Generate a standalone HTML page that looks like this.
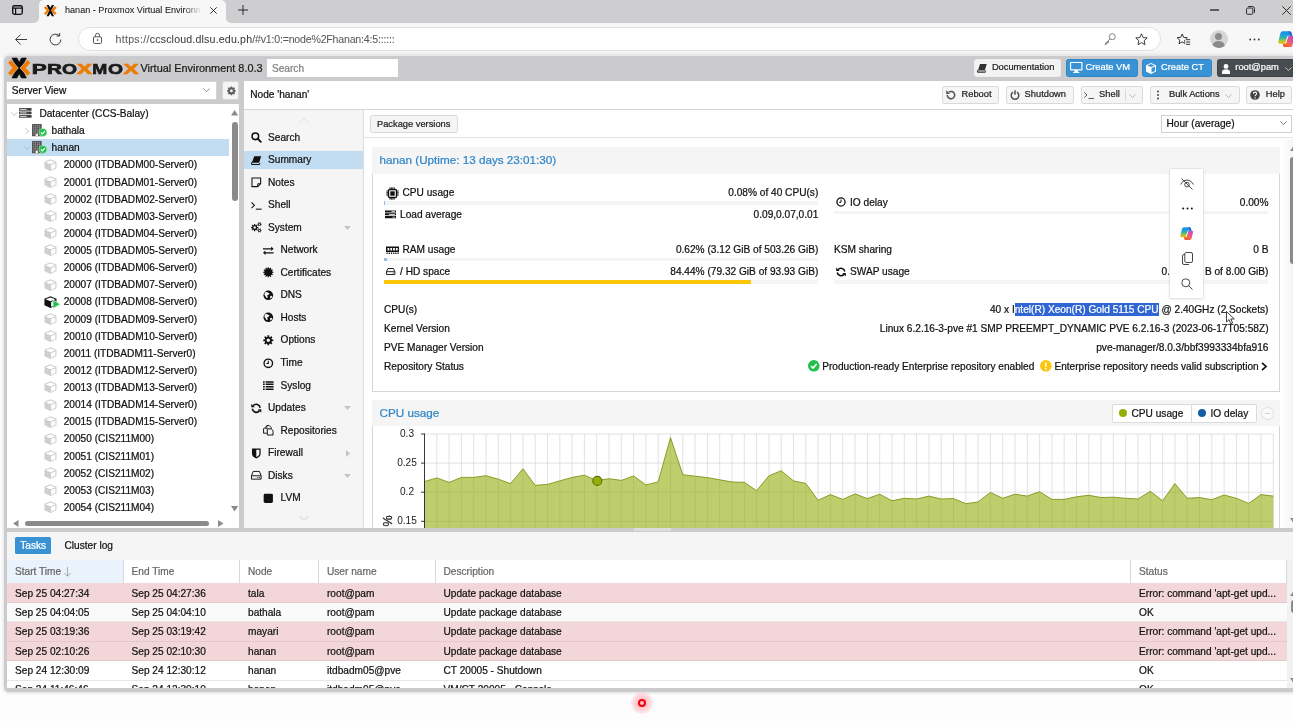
<!DOCTYPE html>
<html lang="en">
<head>
<meta charset="utf-8">
<title>hanan - Proxmox Virtual Environment</title>
<style>
*{box-sizing:border-box;margin:0;padding:0}
html,body{width:1293px;height:721px;overflow:hidden;background:#fdfdfd}
body{font-family:"Liberation Sans",Arial,Helvetica,sans-serif;font-size:10.14px;color:#111;position:relative;line-height:1}
.a{position:absolute}
.t{position:absolute;white-space:nowrap;line-height:12px;height:12px;-webkit-text-stroke:0.22px currentColor}
.r{text-align:right}
svg{position:absolute;overflow:visible}
/* browser chrome */
#tabstrip{left:0;top:0;width:1293px;height:23px;background:#cecdd0}
#tab{left:39px;top:0;width:187px;height:23px;background:#f7f7f7;border-radius:5px 5px 0 0}
#toolbar{left:0;top:23px;width:1293px;height:34px;background:#f7f7f7}
#url{left:78px;top:27px;width:1083px;height:24px;background:#fff;border:1px solid #e2e2e2;border-radius:12px}
.seg{font-family:"Liberation Sans",sans-serif}
/* page */
#shadow{left:2.500px;top:53.500px;width:1300px;height:641px;border-radius:7px;background:#e3e3e4;filter:blur(1.5px)}
#page{left:4.200px;top:55.600px;width:1296px;height:636.700px;background:#cbcacd;border-radius:5px}
.btn{position:absolute;height:18px;border:1px solid #d9d9d9;border-radius:2.500px;background:#f5f5f5;font-size:9.3px;color:#222}
.btn .t{top:1px}
.blue{background:#3892d4;border-color:#2f86c6;color:#fff}
.dark{background:#474c50;border-color:#3c4144;color:#fff}
/* tree */
#tree{left:7px;top:104px;width:233px;height:424px;background:#fff;overflow:hidden}
.tr{position:absolute;left:0;width:222px;height:17.13px}
.tr .t{top:3.4px}
.tr svg{margin-top:0.8px}
/* nav */
#nav{left:244px;top:110px;width:119px;height:418px;background:#f5f5f5;overflow:hidden}
.ni{position:absolute;left:0;width:119px;height:18px}
.ni .t{top:3.5px}
.ni svg{margin-top:0.4px}
/* grid */
.gh{position:absolute;top:560px;height:23.5px;background:#fff;border-right:1px solid #d8d8d8;color:#666}
.gh .t{top:6px;left:8px}
.gr{position:absolute;left:7px;width:1279.6px;height:19.6px;border-bottom:1px solid #e6e6e6}
.gr.e{background:#f3d6d8;border-bottom-color:#e6c8ca}
.gr.w{background:#fafafa}
.gr .t{top:var(--t,4.5px)}
</style>
</head>
<body>
<div id="wrap" style="position:absolute;left:0;top:0;width:1293px;height:721px;overflow:hidden;will-change:transform">
<!-- ===== Browser chrome ===== -->
<div class="a" id="tabstrip"></div>
<div class="a" id="tab"></div>
<div class="a" id="toolbar"></div>
<div class="a" id="url"></div>

<!-- tab actions icon -->
<svg style="left:12px;top:5px" width="11" height="10" viewBox="0 0 11 10"><rect x="0.700" y="0.700" width="9.600" height="8.600" rx="1.800" fill="none" stroke="#111" stroke-width="1.350"/><path d="M0.600 3h9.800M3.600 3v6.400" stroke="#111" stroke-width="1.250" fill="none"/></svg>
<!-- tab flares -->
<svg style="left:34px;top:18px" width="5" height="5" viewBox="0 0 5 5"><path d="M5 0v5H0A5 5 0 0 0 5 0z" fill="#f7f7f7"/></svg>
<svg style="left:226px;top:18px" width="5" height="5" viewBox="0 0 5 5"><path d="M0 0v5h5A5 5 0 0 1 0 0z" fill="#f7f7f7"/></svg>
<!-- favicon -->
<svg style="left:44.100px;top:4.600px" width="12.600" height="11.200" viewBox="0 0 22.400 20"><path d="M4.600 0H8.400L11.200 4.800 14.000 0H17.800L13.300 10 17.800 20H14.000L11.200 15.200 8.400 20H4.600L9.100 10z" fill="#0d0d0d"/><path d="M1.500 3.400 7.400 9.900 1.500 16.400" stroke="#ee7a00" stroke-width="4.200" fill="none"/><path d="M20.900 3.400 15.000 9.900 20.900 16.400" stroke="#ee7a00" stroke-width="4.200" fill="none"/></svg>
<div class="t" style="left:65px;top:3.700px;font-size:9.100px;-webkit-text-stroke:0.080px #1b1b1b;color:#1b1b1b;width:138px;overflow:hidden;-webkit-mask-image:linear-gradient(90deg,#000 86%,transparent 99%);mask-image:linear-gradient(90deg,#000 86%,transparent 99%)">hanan - Proxmox Virtual Environment</div>
<svg style="left:210px;top:6.5px" width="7" height="7" viewBox="0 0 7 7"><path d="M0.3 0.3l6.4 6.4M6.7 0.3L0.3 6.7" stroke="#1b1b1b" stroke-width="0.9"/></svg>
<svg style="left:237.5px;top:5px" width="10" height="10" viewBox="0 0 10 10"><path d="M5 0v10M0 5h10" stroke="#1b1b1b" stroke-width="0.9"/></svg>
<!-- window controls -->
<svg style="left:1210px;top:9px" width="9" height="2" viewBox="0 0 9 2"><path d="M0 1h9" stroke="#000" stroke-width="1.100"/></svg>
<svg style="left:1246px;top:5.5px" width="9" height="9" viewBox="0 0 9 9"><rect x="0.5" y="2" width="6.3" height="6.3" rx="1.2" fill="none" stroke="#1b1b1b" stroke-width="0.9"/><path d="M2.2 0.5h4.3a2 2 0 0 1 2 2v4.3" fill="none" stroke="#1b1b1b" stroke-width="0.9"/></svg>
<svg style="left:1282px;top:5.5px" width="9" height="9" viewBox="0 0 9 9"><path d="M0.3 0.3l8.4 8.4M8.7 0.3L0.3 8.7" stroke="#1b1b1b" stroke-width="0.9"/></svg>
<!-- nav buttons -->
<svg style="left:15px;top:33.5px" width="12" height="11" viewBox="0 0 12 11"><path d="M12 5.5H0.8M5.6 0.5 0.6 5.5l5 5" fill="none" stroke="#3a3a3a" stroke-width="1"/></svg>
<svg style="left:48.5px;top:32.5px" width="13" height="13" viewBox="0 0 13 13"><path d="M11.9 6.5a5.4 5.4 0 1 1-1.7-3.9" fill="none" stroke="#3a3a3a" stroke-width="1"/><path d="M10.6 0v3h-3" fill="none" stroke="#3a3a3a" stroke-width="1"/></svg>
<!-- lock -->
<svg style="left:93px;top:33px" width="9" height="11" viewBox="0 0 9 11"><rect x="0.5" y="3.8" width="8" height="6.7" rx="1.2" fill="none" stroke="#444" stroke-width="0.9"/><path d="M2.4 3.8V2.5a2.1 2.1 0 0 1 4.2 0v1.3" fill="none" stroke="#444" stroke-width="0.9"/><circle cx="4.5" cy="7.1" r="0.8" fill="#444"/></svg>
<div class="t" style="left:115.5px;top:32.5px;font-size:10.6px;-webkit-text-stroke:0.050px #555;color:#5a5a5a;line-height:13px;height:13px"><span style="letter-spacing:0.3px">https://</span><span style="color:#3a3a3a;letter-spacing:0.18px">ccscloud.dlsu.edu.ph</span><span style="letter-spacing:-0.2px">/#v1:0:=node%2Fhanan:4:5::::::</span></div>
<!-- key -->
<svg style="left:1104px;top:33px" width="12" height="12" viewBox="0 0 12 12"><circle cx="8.3" cy="3.7" r="3" fill="none" stroke="#777" stroke-width="0.9"/><path d="M6.1 5.9 0.8 11.2h2v-1.6h1.6V8" fill="none" stroke="#777" stroke-width="0.9"/></svg>
<!-- star -->
<svg style="left:1135px;top:32.500px" width="13" height="13" viewBox="0 0 13 13"><path d="M6.50 0.80L8.15 4.53L12.21 4.95L9.16 7.67L10.03 11.65L6.50 9.60L2.97 11.65L3.84 7.67L0.79 4.95L4.85 4.53z" fill="none" stroke="#333" stroke-width="0.950" stroke-linejoin="round"/></svg>
<!-- favorites -->
<svg style="left:1176.500px;top:32.500px" width="14" height="13" viewBox="0 0 14 13"><path d="M5.20 1.00L6.67 4.38L10.34 4.73L7.58 7.17L8.37 10.77L5.20 8.90L2.03 10.77L2.82 7.17L0.06 4.73L3.73 4.38z" fill="none" stroke="#2a2a2a" stroke-width="0.950" stroke-linejoin="round"/><rect x="8.200" y="5.800" width="6" height="6.500" fill="#f7f7f7"/><path d="M9 6.700h4.200M9 9h4.200M9 11.300h4.200" stroke="#2a2a2a" stroke-width="0.950"/></svg>
<!-- profile -->
<div class="a" style="left:1209.5px;top:30px;width:18px;height:18px;border-radius:9px;background:#d6d5d6;overflow:hidden"><div class="a" style="left:5.5px;top:3px;width:7px;height:7px;border-radius:4px;background:#8b8a8b"></div><div class="a" style="left:2.5px;top:11px;width:13px;height:10px;border-radius:6px 6px 0 0;background:#8b8a8b"></div></div>
<!-- dots -->
<svg style="left:1249px;top:38px" width="11" height="3" viewBox="0 0 11 3"><circle cx="1.2" cy="1.5" r="0.9" fill="#333"/><circle cx="5.5" cy="1.5" r="0.9" fill="#333"/><circle cx="9.8" cy="1.5" r="0.9" fill="#333"/></svg>
<!-- copilot -->
<svg style="left:1278px;top:30.750px" width="16" height="16.300" viewBox="0 0 16 16.300"><defs><linearGradient id="cp1" x1="0" y1="0" x2="0" y2="1"><stop offset="0" stop-color="#1a8df0"/><stop offset="0.300" stop-color="#1f9ddc"/><stop offset="0.550" stop-color="#33b7a0"/><stop offset="0.780" stop-color="#b7c62e"/><stop offset="1" stop-color="#f3b81f"/></linearGradient><linearGradient id="cp2" x1="1" y1="0" x2="0.200" y2="1"><stop offset="0" stop-color="#a850e6"/><stop offset="0.350" stop-color="#e24fa0"/><stop offset="0.700" stop-color="#f36a4a"/><stop offset="1" stop-color="#f2552a"/></linearGradient><symbol id="cpl" viewBox="0 0 16 16.300"><path d="M9.600 6.200Q10.100 4.700 11.600 4.700H14.500Q16.600 4.700 16.100 6.800L14.400 14.200Q13.900 16.200 12 16.200H6.600Q5.400 16.200 5.100 14.800L4.700 12.400H7Q8 12.400 8.400 11.200z" fill="url(#cp2)"/><path d="M2.400 2.300Q2.900 0.300 4.900 0.300H11.400Q12.900 0.300 13.400 1.800L14.200 4.700H11.400Q9.900 4.700 9.500 6.100L7.700 11.900Q7.400 12.800 6.400 12.800H1.800Q-0.200 12.800 0.300 10.800z" fill="url(#cp1)"/><path d="M10.400 0.300H11.400Q12.900 0.300 13.400 1.800L14.200 4.700H12.400Q12 2 10.400 0.300z" fill="#2a52d4"/><path d="M9.900 5.200 7.500 12.500" stroke="#fff" stroke-width="0.900"/></symbol></defs><use href="#cpl" x="0" y="0" width="16" height="16.300"/></svg>


<!-- ===== Page ===== -->
<div class="a" id="shadow"></div>
<div class="a" id="page"></div>

<!-- logo -->
<svg style="left:8px;top:57.7px" width="22.4" height="20" viewBox="0 0 22.4 20"><path d="M4.000 0H8.900L11.200 4.200 13.500 0H18.400L13.700 10 18.400 20H13.500L11.200 15.800 8.900 20H4.000L8.700 10z" fill="#0d0d0d" stroke="#0d0d0d" stroke-width="0.6" stroke-linejoin="round"/><path d="M1.500 3.400 7.400 9.900 1.500 16.400" stroke="#d8d0c8" stroke-width="4.900" fill="none"/><path d="M20.900 3.400 15.000 9.900 20.900 16.400" stroke="#d8d0c8" stroke-width="4.900" fill="none"/><path d="M1.500 3.400 7.400 9.900 1.500 16.400" stroke="#ee7a00" stroke-width="4.000" fill="none"/><path d="M20.900 3.400 15.000 9.900 20.900 16.400" stroke="#ee7a00" stroke-width="4.000" fill="none"/></svg>
<svg style="left:0;top:0" width="160" height="80" font-family="'Liberation Sans',Arial,sans-serif" font-weight="bold" font-size="15.4px" stroke-width="0.7" paint-order="stroke"><text transform="translate(31.7,73.8) scale(1.460,1)" fill="#1a1a1a" stroke="#1a1a1a">P</text><text transform="translate(46.9,73.8) scale(1.349,1)" fill="#1a1a1a" stroke="#1a1a1a">R</text><text transform="translate(62.0,73.8) scale(1.252,1)" fill="#1a1a1a" stroke="#1a1a1a">O</text><text transform="translate(77.0,73.8) scale(1.460,1)" fill="#ee7a00" stroke="#ee7a00">X</text><text transform="translate(92.2,73.8) scale(1.169,1)" fill="#1a1a1a" stroke="#1a1a1a">M</text><text transform="translate(107.9,73.8) scale(1.252,1)" fill="#1a1a1a" stroke="#1a1a1a">O</text><text transform="translate(123.5,73.8) scale(1.460,1)" fill="#ee7a00" stroke="#ee7a00">X</text></svg>
<div class="t" style="left:140.5px;top:61.5px;font-size:10.9px;line-height:13px;height:13px;color:#1a1a1a">Virtual Environment 8.0.3</div>
<div class="a" style="left:266.800px;top:59.200px;width:131.400px;height:17.800px;background:#fff"><div class="t" style="left:5.200px;top:3.800px;color:#808080">Search</div></div>
<!-- header buttons -->
<div class="btn" style="left:973.600px;top:59px;width:87.700px;background:#f3f3f3;border-color:#eee"><svg style="left:2.3px;top:3.5px" width="10" height="9" viewBox="0 0 10 9"><path d="M2.600 0.300H9.600L7.600 6.500H1.400A1.300 1.300 0 0 0 1.400 8.700H7.400L7.600 8.000" fill="none" stroke="#333" stroke-width="0.01"/><path d="M3 0h6.800l-2 6.400H1.600c-.8 0-.8 1.200 0 1.200h6.200l.4-1h.9l-.7 2.200H1.600C-.6 8.800-.3 6 1.200 5.700z" fill="#333"/></svg><div class="t" style="left:17.3px">Documentation</div></div>
<div class="btn blue" style="left:1066px;top:59px;width:71.500px"><svg style="left:2.600px;top:1.600px" width="12.500" height="11.200" viewBox="0 0 11 10" preserveAspectRatio="none"><path d="M0.8 0h9.400a.8.8 0 0 1 .8.800v6a.8.8 0 0 1-.8.800H6.800l.4 1.400h1v.800H2.800V9h1l.4-1.400H.8a.8.8 0 0 1-.8-.8V.8A.8.8 0 0 1 .8 0zM1 1v5.400h9V1z" fill="#fff"/></svg><div class="t" style="left:18.5px">Create VM</div></div>
<div class="btn blue" style="left:1142px;top:59px;width:69.500px"><svg style="left:3px;top:3px" width="10" height="11" viewBox="0 0 10 11"><path d="M5 0 10 2.200v6.400L5 11 0 8.600V2.200zM1.300 2.500 5 4.100l3.700-1.600L5 1.000zM5.500 5v4.600l3.500-1.700V3.500z" fill="#fff" fill-rule="evenodd"/></svg><div class="t" style="left:18px">Create CT</div></div>
<div class="btn dark" style="left:1217px;top:59px;width:80px"><svg style="left:4px;top:3.5px" width="8" height="10" viewBox="0 0 8 10"><circle cx="4" cy="2.400" r="2.400" fill="#fff"/><path d="M0 10V7.800C0 6 1.500 5.200 4 5.200s4 .8 4 2.600V10z" fill="#fff"/></svg><div class="t" style="left:17.3px">root@pam</div><svg style="left:67.2px;top:6.5px" width="7" height="4" viewBox="0 0 7 4"><path d="M0.400 0.400 3.500 3.500 6.600 0.400" fill="none" stroke="#ddd" stroke-width="0.800"/></svg></div>


<!-- server view select -->
<div class="a" style="left:6.300px;top:81px;width:210.700px;height:19px;background:#fff;border:1px solid #d4d4d4"><div class="t" style="left:4.500px;top:2.500px">Server View</div><svg style="left:196px;top:6px" width="7" height="4.400" viewBox="0 0 8 5"><path d="M0.400 0.400 4 4.200 7.600 0.400" fill="none" stroke="#888" stroke-width="1.100"/></svg></div>
<div class="btn" style="left:222px;top:81px;width:17.200px;height:19px;border-color:#d8d8d8"><svg style="left:3.600px;top:4.200px" width="8.800" height="8.800" viewBox="-0.600 0 11.200 10"><path d="M5 0.000l.9 0 .3 1.300 1 .4 1.100-.7 1.300 1.300-.7 1.100.4 1 1.300.3v1.800l-1.300.3-.4 1 .7 1.100-1.300 1.300-1.100-.7-1 .4-.3 1.300H4.100l-.3-1.300-1-.4-1.100.7L.4 8.900l.7-1.100-.4-1L-.6 6.500V4.700l1.300-.3.4-1-.7-1.100L1.700 1l1.100.7 1-.4.300-1.300zM5 3.700a1.900 1.900 0 1 0 0 3.800 1.900 1.900 0 0 0 0-3.800z" fill="#606060" fill-rule="evenodd"/></svg></div>
<!-- tree -->
<div class="a" id="tree" style="width:231.500px;height:423.500px">
<div class="tr" style="top:0.60px;"><svg style="left:4px;top:6.200px" width="6.600" height="4.200" viewBox="0 0 6.600 4.200"><path d="M0.400 0.400 3.300 3.600 6.200 0.400" fill="none" stroke="#b4b4b4" stroke-width="0.800"/></svg><svg style="left:12.400px;top:2.300px" width="12.600" height="10" viewBox="0 0 12.600 10"><g fill="#4a4a4a"><rect x="0" y="0" width="12.600" height="2.800" rx="0.400"/><rect x="0" y="3.500" width="12.600" height="2.800" rx="0.400"/><rect x="0" y="7" width="12.600" height="2.800" rx="0.400"/></g><g fill="#d4d4d4"><rect x="1" y="0.900" width="6.500" height="1"/><rect x="1" y="4.400" width="6.500" height="1"/><rect x="1" y="7.900" width="6.500" height="1"/></g><g fill="#222"><rect x="9.800" y="0.900" width="1.600" height="1"/><rect x="9.800" y="4.400" width="1.600" height="1"/><rect x="9.800" y="7.900" width="1.600" height="1"/></g></svg><div class="t" style="left:32.400px">Datacenter (CCS-Balay)</div></div>
<div class="tr" style="top:17.73px;"><svg style="left:18px;top:5px" width="4.200" height="6.600" viewBox="0 0 4.200 6.600"><path d="M0.400 0.400 3.600 3.300 0.400 6.200" fill="none" stroke="#b4b4b4" stroke-width="0.800"/></svg><svg style="left:25px;top:1.6px" width="15" height="14" viewBox="0 0 15 14"><rect x="0" y="0" width="9.700" height="12.300" rx="0.400" fill="#555"/><g fill="#a9a9a9"><rect x="1.3" y="1.3" width="1.000" height="1.100"/><rect x="1.3" y="3.3" width="1.000" height="1.100"/><rect x="1.3" y="5.3" width="1.000" height="1.100"/><rect x="1.3" y="7.3" width="1.000" height="1.100"/><rect x="1.3" y="9.3" width="1.000" height="1.100"/><rect x="3.2" y="1.3" width="1.000" height="1.100"/><rect x="3.2" y="3.3" width="1.000" height="1.100"/><rect x="3.2" y="5.3" width="1.000" height="1.100"/><rect x="3.2" y="7.3" width="1.000" height="1.100"/><rect x="5.1" y="1.3" width="1.000" height="1.100"/><rect x="5.1" y="3.3" width="1.000" height="1.100"/><rect x="5.1" y="5.3" width="1.000" height="1.100"/><rect x="5.1" y="7.3" width="1.000" height="1.100"/><rect x="6.999999999999999" y="1.3" width="1.000" height="1.100"/><rect x="6.999999999999999" y="3.3" width="1.000" height="1.100"/><rect x="6.999999999999999" y="5.3" width="1.000" height="1.100"/><rect x="6.999999999999999" y="7.3" width="1.000" height="1.100"/><rect x="6.999999999999999" y="9.3" width="1.000" height="1.100"/><rect x="3.600" y="9.600" width="2.400" height="2.400" fill="#eee"/></g><circle cx="10.900" cy="8.400" r="4.000" fill="#21bf4b" stroke="#fff" stroke-width="0.400"/><path d="M8.900 8.500 10.400 9.900 12.900 7.100" fill="none" stroke="#fff" stroke-width="1.300"/></svg><div class="t" style="left:44.500px">bathala</div></div>
<div class="tr" style="top:34.86px;background:#c2ddf2;"><svg style="left:16.700px;top:6.800px" width="6.600" height="4.200" viewBox="0 0 6.600 4.200"><path d="M0.400 0.400 3.300 3.600 6.200 0.400" fill="none" stroke="#a4b4c4" stroke-width="0.800"/></svg><svg style="left:25px;top:1.6px" width="15" height="14" viewBox="0 0 15 14"><rect x="0" y="0" width="9.700" height="12.300" rx="0.400" fill="#555"/><g fill="#a9a9a9"><rect x="1.3" y="1.3" width="1.000" height="1.100"/><rect x="1.3" y="3.3" width="1.000" height="1.100"/><rect x="1.3" y="5.3" width="1.000" height="1.100"/><rect x="1.3" y="7.3" width="1.000" height="1.100"/><rect x="1.3" y="9.3" width="1.000" height="1.100"/><rect x="3.2" y="1.3" width="1.000" height="1.100"/><rect x="3.2" y="3.3" width="1.000" height="1.100"/><rect x="3.2" y="5.3" width="1.000" height="1.100"/><rect x="3.2" y="7.3" width="1.000" height="1.100"/><rect x="5.1" y="1.3" width="1.000" height="1.100"/><rect x="5.1" y="3.3" width="1.000" height="1.100"/><rect x="5.1" y="5.3" width="1.000" height="1.100"/><rect x="5.1" y="7.3" width="1.000" height="1.100"/><rect x="6.999999999999999" y="1.3" width="1.000" height="1.100"/><rect x="6.999999999999999" y="3.3" width="1.000" height="1.100"/><rect x="6.999999999999999" y="5.3" width="1.000" height="1.100"/><rect x="6.999999999999999" y="7.3" width="1.000" height="1.100"/><rect x="6.999999999999999" y="9.3" width="1.000" height="1.100"/><rect x="3.600" y="9.600" width="2.400" height="2.400" fill="#eee"/></g><circle cx="10.900" cy="8.400" r="4.000" fill="#21bf4b" stroke="#fff" stroke-width="0.400"/><path d="M8.900 8.500 10.400 9.900 12.900 7.100" fill="none" stroke="#fff" stroke-width="1.300"/></svg><div class="t" style="left:44.500px">hanan</div></div>
<div class="tr" style="top:51.99px;"><svg style="left:37.100px;top:2px" width="12.900" height="12.400" viewBox="0 0 12.500 13" preserveAspectRatio="none"><path d="M6.250 0.300 12.100 2.800V9.800L6.250 12.700 0.400 9.800V2.800z" fill="#cfcfcf"/><path d="M1.500 3.400 6.250 5.400 11.000 3.400 6.250 1.500z" fill="#fff"/><path d="M6.900 6.400V11.200L11.000 9.200V4.700z" fill="#fff"/></svg><div class="t" style="left:56.700px">20000 (ITDBADM00-Server0)</div></div>
<div class="tr" style="top:69.12px;"><svg style="left:37.100px;top:2px" width="12.900" height="12.400" viewBox="0 0 12.500 13" preserveAspectRatio="none"><path d="M6.250 0.300 12.100 2.800V9.800L6.250 12.700 0.400 9.800V2.800z" fill="#cfcfcf"/><path d="M1.500 3.400 6.250 5.400 11.000 3.400 6.250 1.500z" fill="#fff"/><path d="M6.900 6.400V11.200L11.000 9.200V4.700z" fill="#fff"/></svg><div class="t" style="left:56.700px">20001 (ITDBADM01-Server0)</div></div>
<div class="tr" style="top:86.25px;"><svg style="left:37.100px;top:2px" width="12.900" height="12.400" viewBox="0 0 12.500 13" preserveAspectRatio="none"><path d="M6.250 0.300 12.100 2.800V9.800L6.250 12.700 0.400 9.800V2.800z" fill="#cfcfcf"/><path d="M1.500 3.400 6.250 5.400 11.000 3.400 6.250 1.500z" fill="#fff"/><path d="M6.900 6.400V11.200L11.000 9.200V4.700z" fill="#fff"/></svg><div class="t" style="left:56.700px">20002 (ITDBADM02-Server0)</div></div>
<div class="tr" style="top:103.38px;"><svg style="left:37.100px;top:2px" width="12.900" height="12.400" viewBox="0 0 12.500 13" preserveAspectRatio="none"><path d="M6.250 0.300 12.100 2.800V9.800L6.250 12.700 0.400 9.800V2.800z" fill="#cfcfcf"/><path d="M1.500 3.400 6.250 5.400 11.000 3.400 6.250 1.500z" fill="#fff"/><path d="M6.900 6.400V11.200L11.000 9.200V4.700z" fill="#fff"/></svg><div class="t" style="left:56.700px">20003 (ITDBADM03-Server0)</div></div>
<div class="tr" style="top:120.51px;"><svg style="left:37.100px;top:2px" width="12.900" height="12.400" viewBox="0 0 12.500 13" preserveAspectRatio="none"><path d="M6.250 0.300 12.100 2.800V9.800L6.250 12.700 0.400 9.800V2.800z" fill="#cfcfcf"/><path d="M1.500 3.400 6.250 5.400 11.000 3.400 6.250 1.500z" fill="#fff"/><path d="M6.900 6.400V11.200L11.000 9.200V4.700z" fill="#fff"/></svg><div class="t" style="left:56.700px">20004 (ITDBADM04-Server0)</div></div>
<div class="tr" style="top:137.64px;"><svg style="left:37.100px;top:2px" width="12.900" height="12.400" viewBox="0 0 12.500 13" preserveAspectRatio="none"><path d="M6.250 0.300 12.100 2.800V9.800L6.250 12.700 0.400 9.800V2.800z" fill="#cfcfcf"/><path d="M1.500 3.400 6.250 5.400 11.000 3.400 6.250 1.500z" fill="#fff"/><path d="M6.900 6.400V11.200L11.000 9.200V4.700z" fill="#fff"/></svg><div class="t" style="left:56.700px">20005 (ITDBADM05-Server0)</div></div>
<div class="tr" style="top:154.77px;"><svg style="left:37.100px;top:2px" width="12.900" height="12.400" viewBox="0 0 12.500 13" preserveAspectRatio="none"><path d="M6.250 0.300 12.100 2.800V9.800L6.250 12.700 0.400 9.800V2.800z" fill="#cfcfcf"/><path d="M1.500 3.400 6.250 5.400 11.000 3.400 6.250 1.500z" fill="#fff"/><path d="M6.900 6.400V11.200L11.000 9.200V4.700z" fill="#fff"/></svg><div class="t" style="left:56.700px">20006 (ITDBADM06-Server0)</div></div>
<div class="tr" style="top:171.90px;"><svg style="left:37.100px;top:2px" width="12.900" height="12.400" viewBox="0 0 12.500 13" preserveAspectRatio="none"><path d="M6.250 0.300 12.100 2.800V9.800L6.250 12.700 0.400 9.800V2.800z" fill="#cfcfcf"/><path d="M1.500 3.400 6.250 5.400 11.000 3.400 6.250 1.500z" fill="#fff"/><path d="M6.900 6.400V11.200L11.000 9.200V4.700z" fill="#fff"/></svg><div class="t" style="left:56.700px">20007 (ITDBADM07-Server0)</div></div>
<div class="tr" style="top:189.03px;"><svg style="left:37.100px;top:2px" width="12.900" height="12.400" viewBox="0 0 12.500 13" preserveAspectRatio="none"><path d="M6.250 0.300 12.100 2.800V9.800L6.250 12.700 0.400 9.800V2.800z" fill="#111"/><path d="M1.500 3.400 6.250 5.400 11.000 3.400 6.250 1.500z" fill="#fff"/><path d="M6.900 6.400V11.200L11.000 9.200V4.700z" fill="#fff"/></svg><svg style="left:45.700px;top:5.800px" width="7.400" height="8.400" viewBox="0 0 7 8"><path d="M0 0 7 4 0 8z" fill="#21bf4b" stroke="#fff" stroke-width="0.600"/></svg><div class="t" style="left:56.700px">20008 (ITDBADM08-Server0)</div></div>
<div class="tr" style="top:206.16px;"><svg style="left:37.100px;top:2px" width="12.900" height="12.400" viewBox="0 0 12.500 13" preserveAspectRatio="none"><path d="M6.250 0.300 12.100 2.800V9.800L6.250 12.700 0.400 9.800V2.800z" fill="#cfcfcf"/><path d="M1.500 3.400 6.250 5.400 11.000 3.400 6.250 1.500z" fill="#fff"/><path d="M6.900 6.400V11.200L11.000 9.200V4.700z" fill="#fff"/></svg><div class="t" style="left:56.700px">20009 (ITDBADM09-Server0)</div></div>
<div class="tr" style="top:223.29px;"><svg style="left:37.100px;top:2px" width="12.900" height="12.400" viewBox="0 0 12.500 13" preserveAspectRatio="none"><path d="M6.250 0.300 12.100 2.800V9.800L6.250 12.700 0.400 9.800V2.800z" fill="#cfcfcf"/><path d="M1.500 3.400 6.250 5.400 11.000 3.400 6.250 1.500z" fill="#fff"/><path d="M6.900 6.400V11.200L11.000 9.200V4.700z" fill="#fff"/></svg><div class="t" style="left:56.700px">20010 (ITDBADM10-Server0)</div></div>
<div class="tr" style="top:240.42px;"><svg style="left:37.100px;top:2px" width="12.900" height="12.400" viewBox="0 0 12.500 13" preserveAspectRatio="none"><path d="M6.250 0.300 12.100 2.800V9.800L6.250 12.700 0.400 9.800V2.800z" fill="#cfcfcf"/><path d="M1.500 3.400 6.250 5.400 11.000 3.400 6.250 1.500z" fill="#fff"/><path d="M6.900 6.400V11.200L11.000 9.200V4.700z" fill="#fff"/></svg><div class="t" style="left:56.700px">20011 (ITDBADM11-Server0)</div></div>
<div class="tr" style="top:257.55px;"><svg style="left:37.100px;top:2px" width="12.900" height="12.400" viewBox="0 0 12.500 13" preserveAspectRatio="none"><path d="M6.250 0.300 12.100 2.800V9.800L6.250 12.700 0.400 9.800V2.800z" fill="#cfcfcf"/><path d="M1.500 3.400 6.250 5.400 11.000 3.400 6.250 1.500z" fill="#fff"/><path d="M6.900 6.400V11.200L11.000 9.200V4.700z" fill="#fff"/></svg><div class="t" style="left:56.700px">20012 (ITDBADM12-Server0)</div></div>
<div class="tr" style="top:274.68px;"><svg style="left:37.100px;top:2px" width="12.900" height="12.400" viewBox="0 0 12.500 13" preserveAspectRatio="none"><path d="M6.250 0.300 12.100 2.800V9.800L6.250 12.700 0.400 9.800V2.800z" fill="#cfcfcf"/><path d="M1.500 3.400 6.250 5.400 11.000 3.400 6.250 1.500z" fill="#fff"/><path d="M6.900 6.400V11.200L11.000 9.200V4.700z" fill="#fff"/></svg><div class="t" style="left:56.700px">20013 (ITDBADM13-Server0)</div></div>
<div class="tr" style="top:291.81px;"><svg style="left:37.100px;top:2px" width="12.900" height="12.400" viewBox="0 0 12.500 13" preserveAspectRatio="none"><path d="M6.250 0.300 12.100 2.800V9.800L6.250 12.700 0.400 9.800V2.800z" fill="#cfcfcf"/><path d="M1.500 3.400 6.250 5.400 11.000 3.400 6.250 1.500z" fill="#fff"/><path d="M6.900 6.400V11.200L11.000 9.200V4.700z" fill="#fff"/></svg><div class="t" style="left:56.700px">20014 (ITDBADM14-Server0)</div></div>
<div class="tr" style="top:308.94px;"><svg style="left:37.100px;top:2px" width="12.900" height="12.400" viewBox="0 0 12.500 13" preserveAspectRatio="none"><path d="M6.250 0.300 12.100 2.800V9.800L6.250 12.700 0.400 9.800V2.800z" fill="#cfcfcf"/><path d="M1.500 3.400 6.250 5.400 11.000 3.400 6.250 1.500z" fill="#fff"/><path d="M6.900 6.400V11.200L11.000 9.200V4.700z" fill="#fff"/></svg><div class="t" style="left:56.700px">20015 (ITDBADM15-Server0)</div></div>
<div class="tr" style="top:326.07px;"><svg style="left:37.100px;top:2px" width="12.900" height="12.400" viewBox="0 0 12.500 13" preserveAspectRatio="none"><path d="M6.250 0.300 12.100 2.800V9.800L6.250 12.700 0.400 9.800V2.800z" fill="#cfcfcf"/><path d="M1.500 3.400 6.250 5.400 11.000 3.400 6.250 1.500z" fill="#fff"/><path d="M6.900 6.400V11.200L11.000 9.200V4.700z" fill="#fff"/></svg><div class="t" style="left:56.700px">20050 (CIS211M00)</div></div>
<div class="tr" style="top:343.20px;"><svg style="left:37.100px;top:2px" width="12.900" height="12.400" viewBox="0 0 12.500 13" preserveAspectRatio="none"><path d="M6.250 0.300 12.100 2.800V9.800L6.250 12.700 0.400 9.800V2.800z" fill="#cfcfcf"/><path d="M1.500 3.400 6.250 5.400 11.000 3.400 6.250 1.500z" fill="#fff"/><path d="M6.900 6.400V11.200L11.000 9.200V4.700z" fill="#fff"/></svg><div class="t" style="left:56.700px">20051 (CIS211M01)</div></div>
<div class="tr" style="top:360.33px;"><svg style="left:37.100px;top:2px" width="12.900" height="12.400" viewBox="0 0 12.500 13" preserveAspectRatio="none"><path d="M6.250 0.300 12.100 2.800V9.800L6.250 12.700 0.400 9.800V2.800z" fill="#cfcfcf"/><path d="M1.500 3.400 6.250 5.400 11.000 3.400 6.250 1.500z" fill="#fff"/><path d="M6.900 6.400V11.200L11.000 9.200V4.700z" fill="#fff"/></svg><div class="t" style="left:56.700px">20052 (CIS211M02)</div></div>
<div class="tr" style="top:377.46px;"><svg style="left:37.100px;top:2px" width="12.900" height="12.400" viewBox="0 0 12.500 13" preserveAspectRatio="none"><path d="M6.250 0.300 12.100 2.800V9.800L6.250 12.700 0.400 9.800V2.800z" fill="#cfcfcf"/><path d="M1.500 3.400 6.250 5.400 11.000 3.400 6.250 1.500z" fill="#fff"/><path d="M6.900 6.400V11.200L11.000 9.200V4.700z" fill="#fff"/></svg><div class="t" style="left:56.700px">20053 (CIS211M03)</div></div>
<div class="tr" style="top:394.59px;"><svg style="left:37.100px;top:2px" width="12.900" height="12.400" viewBox="0 0 12.500 13" preserveAspectRatio="none"><path d="M6.250 0.300 12.100 2.800V9.800L6.250 12.700 0.400 9.800V2.800z" fill="#cfcfcf"/><path d="M1.500 3.400 6.250 5.400 11.000 3.400 6.250 1.500z" fill="#fff"/><path d="M6.900 6.400V11.200L11.000 9.200V4.700z" fill="#fff"/></svg><div class="t" style="left:56.700px">20054 (CIS211M04)</div></div>
<!-- v scrollbar -->
<div class="a" style="left:222px;top:0;width:9.500px;height:413px;background:#fff"></div>
<svg style="left:223.900px;top:6.300px" width="7.200" height="5.600" viewBox="0 0 6.500 5"><path d="M3.250 0 6.500 5H0z" fill="#8b8b8b"/></svg>
<div class="a" style="left:224.600px;top:18px;width:6px;height:78.600px;border-radius:3px;background:#8b8b8b"></div>
<svg style="left:223.900px;top:401.800px" width="7.200" height="5.600" viewBox="0 0 6.500 5"><path d="M0 0H6.500L3.250 5z" fill="#8b8b8b"/></svg>
<!-- h scrollbar -->
<div class="a" style="left:0;top:413px;width:231.500px;height:10.500px;background:#fff"></div>
<svg style="left:6.200px;top:415.800px" width="5.500" height="7" viewBox="0 0 5.500 7"><path d="M0 3.500 5.500 0V7z" fill="#8b8b8b"/></svg>
<div class="a" style="left:18px;top:416.500px;width:184px;height:5.500px;border-radius:2.750px;background:#8b8b8b"></div>
<svg style="left:210.600px;top:415.800px" width="5.500" height="7" viewBox="0 0 5.500 7"><path d="M5.500 3.500 0 0V7z" fill="#8b8b8b"/></svg>
</div>


<!-- title bar -->
<div class="a" style="left:243.500px;top:80.500px;width:1050px;height:29.500px;background:#fff;border-bottom:1px solid #d4d4d4"></div>
<div class="t" style="left:250.200px;top:88.700px">Node 'hanan'</div>
<div class="btn" style="left:942px;top:86.400px;width:57px;height:17.600px"><svg style="left:2.800px;top:3px" width="10" height="10" viewBox="0 0 10 10"><path d="M1.300 5.000A3.700 3.700 0 1 0 2.700 2.200" fill="none" stroke="#505050" stroke-width="1.500"/><path d="M0.200 0.300V4H3.900z" fill="#505050"/></svg><div class="t" style="left:18.5px;top:1px">Reboot</div></div>
<div class="btn" style="left:1005.8px;top:86.400px;width:68px;height:17.600px"><svg style="left:2.800px;top:3px" width="10" height="10" viewBox="0 0 10 10"><path d="M3.000 2.200A3.800 3.800 0 1 0 7.000 2.200" fill="none" stroke="#505050" stroke-width="1.500"/><path d="M5 0.200V4.800" stroke="#505050" stroke-width="1.500"/></svg><div class="t" style="left:17.8px;top:1px">Shutdown</div></div>
<div class="btn" style="left:1080.5px;top:86.400px;width:62px;height:17.600px"><svg style="left:2.800px;top:3px" width="10" height="10" viewBox="0 0 10 10"><path d="M0.300 2.500 3 5 0.300 7.500" fill="none" stroke="#444" stroke-width="0.900"/><path d="M4.500 8.500h5.500" stroke="#444" stroke-width="0.900"/></svg><div class="t" style="left:17.6px;top:1px">Shell</div><div class="a" style="left:43.700px;top:2px;width:1px;height:12px;background:#d8d8d8"></div><svg style="left:47.800px;top:6.500px" width="7" height="4" viewBox="0 0 7 4"><path d="M0.400 0.400 3.500 3.500 6.600 0.400" fill="none" stroke="#aaa" stroke-width="0.800"/></svg></div>
<div class="btn" style="left:1149.8px;top:86.400px;width:90px;height:17.600px"><svg style="left:2.800px;top:3px" width="10" height="10" viewBox="0 0 10 10"><circle cx="4" cy="1.500" r="1" fill="#444"/><circle cx="4" cy="5" r="1" fill="#444"/><circle cx="4" cy="8.500" r="1" fill="#444"/></svg><div class="t" style="left:18.2px;top:1px">Bulk Actions</div><svg style="left:74.600px;top:6.500px" width="7" height="4" viewBox="0 0 7 4"><path d="M0.400 0.400 3.500 3.500 6.600 0.400" fill="none" stroke="#aaa" stroke-width="0.800"/></svg></div>
<div class="btn" style="left:1246.4px;top:86.400px;width:45.4px;height:17.600px"><svg style="left:2.800px;top:3px" width="10" height="10" viewBox="0 0 10 10"><circle cx="5" cy="5" r="4.800" fill="#444"/><path d="M3.400 3.800c0-2.200 3.300-2.200 3.300-.2 0 1.300-1.600 1.300-1.600 2.600" fill="none" stroke="#fff" stroke-width="1.100"/><circle cx="5.100" cy="7.900" r="0.700" fill="#fff"/></svg><div class="t" style="left:18.4px;top:1px">Help</div></div>
<!-- nav -->
<div class="a" id="nav">
<svg style="left:55px;top:8px" width="10" height="5" viewBox="0 0 10 5"><path d="M0.400 4.600 5 0.600 9.600 4.600" fill="none" stroke="#dcdcdc" stroke-width="0.800"/></svg>
<div class="ni" style="top:18.00px;"><svg style="left:7px;top:3.700px" width="10.600" height="10.600" viewBox="0 0 11 11"><circle cx="4.500" cy="4.500" r="3.400" fill="none" stroke="#111" stroke-width="1.600"/><path d="M7 7 10.200 10.200" stroke="#111" stroke-width="1.900" stroke-linecap="round"/></svg><div class="t" style="left:24px">Search</div></div>
<div class="ni" style="top:40.55px;background:#c2ddf2;"><svg style="left:7px;top:3.700px" width="10.600" height="10.600" viewBox="0 0 11 11"><path d="M3.400 1.200h7.200l-2.200 6.800H1.800c-.9 0-.9 1.300 0 1.300h6.600l.4-1.100h1l-.8 2.300H1.800C-.6 10.500-.3 7.400 1.300 7z" fill="#111"/></svg><div class="t" style="left:24px">Summary</div></div>
<div class="ni" style="top:63.10px;"><svg style="left:7px;top:3.700px" width="10.600" height="10.600" viewBox="0 0 11 11"><path d="M1 1h9v6l-3 3H1z" fill="none" stroke="#111" stroke-width="1.100" stroke-linejoin="round"/><path d="M10 7H7v3" fill="none" stroke="#111" stroke-width="1"/></svg><div class="t" style="left:24px">Notes</div></div>
<div class="ni" style="top:85.65px;"><svg style="left:7px;top:3.700px" width="10.600" height="10.600" viewBox="0 0 11 11"><path d="M0.500 2.500 3.500 5.500 0.500 8.500" fill="none" stroke="#111" stroke-width="1.100"/><path d="M5 9.500h6" stroke="#111" stroke-width="1.100"/></svg><div class="t" style="left:24px">Shell</div></div>
<div class="ni" style="top:108.20px;"><svg style="left:7px;top:3.700px" width="10.600" height="10.600" viewBox="0 0 11 11"><path d="M7.54 5.13L7.54 6.47L6.44 6.38L6.07 7.26L6.92 7.97L5.97 8.92L5.26 8.07L4.38 8.44L4.47 9.54L3.13 9.54L3.22 8.44L2.34 8.07L1.63 8.92L0.68 7.97L1.53 7.26L1.16 6.38L0.06 6.47L0.06 5.13L1.16 5.22L1.53 4.34L0.68 3.63L1.63 2.68L2.34 3.53L3.22 3.16L3.13 2.06L4.47 2.06L4.38 3.16L5.26 3.53L5.97 2.68L6.92 3.63L6.07 4.34L6.44 5.22zM2.5 5.8a1.3 1.3 0 1 0 2.6 0a1.3 1.3 0 1 0 -2.6 0z" fill="#111" fill-rule="evenodd"/><path d="M10.94 1.79L10.94 2.81L10.24 2.73L9.89 3.33L10.31 3.90L9.42 4.41L9.15 3.76L8.45 3.76L8.18 4.41L7.29 3.90L7.71 3.33L7.36 2.73L6.66 2.81L6.66 1.79L7.36 1.87L7.71 1.27L7.29 0.70L8.18 0.19L8.45 0.84L9.15 0.84L9.42 0.19L10.31 0.70L9.89 1.27L10.24 1.87zM8.100000000000001 2.3a0.7 0.7 0 1 0 1.4 0a0.7 0.7 0 1 0 -1.4 0z" fill="#111" fill-rule="evenodd"/><path d="M10.94 8.19L10.94 9.21L10.24 9.13L9.89 9.73L10.31 10.30L9.42 10.81L9.15 10.16L8.45 10.16L8.18 10.81L7.29 10.30L7.71 9.73L7.36 9.13L6.66 9.21L6.66 8.19L7.36 8.27L7.71 7.67L7.29 7.10L8.18 6.59L8.45 7.24L9.15 7.24L9.42 6.59L10.31 7.10L9.89 7.67L10.24 8.27zM8.100000000000001 8.7a0.7 0.7 0 1 0 1.4 0a0.7 0.7 0 1 0 -1.4 0z" fill="#111" fill-rule="evenodd"/></svg><div class="t" style="left:24px">System</div><svg style="left:100px;top:7.500px" width="7" height="4" viewBox="0 0 7 4"><path d="M0 0H7L3.500 4z" fill="#c4c4c4"/></svg></div>
<div class="ni" style="top:130.75px;"><svg style="left:19px;top:3.700px" width="10.600" height="10.600" viewBox="0 0 11 11"><path d="M0 3.500h8.500V1.500L11 4 8.500 6.200V4.700H0zM11 7.500H2.500V5.800L0 8l2.500 2.400V8.700H11z" fill="#111"/></svg><div class="t" style="left:36.5px">Network</div></div>
<div class="ni" style="top:153.30px;"><svg style="left:19px;top:3.700px" width="10.600" height="10.600" viewBox="0 0 11 11"><path d="M10.76 4.88L10.76 6.12L9.66 6.10L9.40 7.06L10.37 7.59L9.75 8.67L8.80 8.10L8.10 8.80L8.67 9.75L7.59 10.37L7.06 9.40L6.10 9.66L6.12 10.76L4.88 10.76L4.90 9.66L3.94 9.40L3.41 10.37L2.33 9.75L2.90 8.80L2.20 8.10L1.25 8.67L0.63 7.59L1.60 7.06L1.34 6.10L0.24 6.12L0.24 4.88L1.34 4.90L1.60 3.94L0.63 3.41L1.25 2.33L2.20 2.90L2.90 2.20L2.33 1.25L3.41 0.63L3.94 1.60L4.90 1.34L4.88 0.24L6.12 0.24L6.10 1.34L7.06 1.60L7.59 0.63L8.67 1.25L8.10 2.20L8.80 2.90L9.75 2.33L10.37 3.41L9.40 3.94L9.66 4.90z" fill="#111"/></svg><div class="t" style="left:36.5px">Certificates</div></div>
<div class="ni" style="top:175.85px;"><svg style="left:19px;top:3.700px" width="10.600" height="10.600" viewBox="0 0 11 11"><circle cx="5.500" cy="5.500" r="5" fill="#111"/><path d="M3 1.800c1 .2 1.500 1 2.500 1s1.500.8 1 1.500-1.800.5-2 1.300.8 1.200.5 2-1.200.8-1.700.2S2.500 6 1.800 5.500 1.500 3 3 1.800zM8 6c.8 0 1.700.3 1.500 1S8.300 9 7.700 8.700 7.300 6 8 6z" fill="#f5f5f5"/></svg><div class="t" style="left:36.5px">DNS</div></div>
<div class="ni" style="top:198.40px;"><svg style="left:19px;top:3.700px" width="10.600" height="10.600" viewBox="0 0 11 11"><circle cx="5.500" cy="5.500" r="5" fill="#111"/><path d="M3 1.800c1 .2 1.500 1 2.500 1s1.500.8 1 1.500-1.800.5-2 1.300.8 1.200.5 2-1.200.8-1.700.2S2.500 6 1.800 5.500 1.500 3 3 1.800zM8 6c.8 0 1.700.3 1.500 1S8.300 9 7.700 8.700 7.300 6 8 6z" fill="#f5f5f5"/></svg><div class="t" style="left:36.5px">Hosts</div></div>
<div class="ni" style="top:220.95px;"><svg style="left:19px;top:3.700px" width="10.600" height="10.600" viewBox="0 0 11 11"><path d="M10.72 4.57L10.72 6.43L9.31 6.34L8.78 7.60L9.85 8.53L8.53 9.85L7.60 8.78L6.34 9.31L6.43 10.72L4.57 10.72L4.66 9.31L3.40 8.78L2.47 9.85L1.15 8.53L2.22 7.60L1.69 6.34L0.28 6.43L0.28 4.57L1.69 4.66L2.22 3.40L1.15 2.47L2.47 1.15L3.40 2.22L4.66 1.69L4.57 0.28L6.43 0.28L6.34 1.69L7.60 2.22L8.53 1.15L9.85 2.47L8.78 3.40L9.31 4.66zM3.7 5.5a1.8 1.8 0 1 0 3.6 0a1.8 1.8 0 1 0 -3.6 0z" fill="#111" fill-rule="evenodd"/></svg><div class="t" style="left:36.5px">Options</div></div>
<div class="ni" style="top:243.50px;"><svg style="left:19px;top:3.700px" width="10.600" height="10.600" viewBox="0 0 11 11"><circle cx="5.500" cy="5.500" r="4.400" fill="none" stroke="#111" stroke-width="1.400"/><path d="M5.500 2.800V5.800H3.500" fill="none" stroke="#111" stroke-width="1.100"/></svg><div class="t" style="left:36.5px">Time</div></div>
<div class="ni" style="top:266.05px;"><svg style="left:19px;top:3.700px" width="10.600" height="10.600" viewBox="0 0 11 11"><path d="M0 1.200h1.800v1.600H0zM0 3.700h1.800v1.600H0zM0 6.200h1.800v1.600H0zM0 8.700h1.800v1.600H0zM2.800 1.200H11v1.600H2.800zM2.800 3.700H11v1.600H2.800zM2.800 6.200H11v1.600H2.800zM2.800 8.700H11v1.600H2.800z" fill="#111"/></svg><div class="t" style="left:36.5px">Syslog</div></div>
<div class="ni" style="top:288.60px;"><svg style="left:7px;top:3.700px" width="10.600" height="10.600" viewBox="0 0 11 11"><path d="M9.500 5.000A4.100 4.100 0 0 0 2.300 2.800" fill="none" stroke="#111" stroke-width="1.700"/><path d="M1.500 6.000A4.100 4.100 0 0 0 8.700 8.200" fill="none" stroke="#111" stroke-width="1.700"/><path d="M0.300 0.800V4.400H3.900zM10.700 10.200V6.600H7.100z" fill="#111"/></svg><div class="t" style="left:24px">Updates</div><svg style="left:100px;top:7.500px" width="7" height="4" viewBox="0 0 7 4"><path d="M0 0H7L3.500 4z" fill="#c4c4c4"/></svg></div>
<div class="ni" style="top:311.15px;"><svg style="left:19px;top:3.700px" width="10.600" height="10.600" viewBox="0 0 11 11"><path d="M4 0.600h2.600L8.500 2.500V4" fill="none" stroke="#111" stroke-width="1"/><path d="M4 0.600V3.500H1.500L4 0.600" fill="none" stroke="#111" stroke-width="0.900"/><path d="M0.600 3.500V8.500H4" fill="none" stroke="#111" stroke-width="1"/><path d="M4.500 4.000H8.500L10.400 5.900V10.400H4.500z" fill="none" stroke="#111" stroke-width="1"/></svg><div class="t" style="left:36.5px">Repositories</div></div>
<div class="ni" style="top:333.70px;"><svg style="left:7px;top:3.700px" width="10.600" height="10.600" viewBox="0 0 11 11"><path d="M1 0.600h9v5c0 3-2.500 4.500-4.500 5.200C3.500 10.100 1 8.600 1 5.600z" fill="#111"/><path d="M5.500 1.900v7.500c1.500-.6 3.200-1.800 3.200-3.800V1.900z" fill="#f5f5f5"/></svg><div class="t" style="left:24px">Firewall</div><svg style="left:102px;top:5.500px" width="4" height="7" viewBox="0 0 4 7"><path d="M0 0 4 3.500 0 7z" fill="#c4c4c4"/></svg></div>
<div class="ni" style="top:356.25px;"><svg style="left:7px;top:3.700px" width="10.600" height="10.600" viewBox="0 0 11 11"><path d="M2.200 1.500h6.600l1.700 4.500v3.500h-10V6z" fill="none" stroke="#111" stroke-width="1"/><path d="M0.500 6h10" stroke="#111" stroke-width="1"/><circle cx="8.700" cy="7.800" r="0.600" fill="#111"/><circle cx="7" cy="7.800" r="0.600" fill="#111"/></svg><div class="t" style="left:24px">Disks</div><svg style="left:100px;top:7.500px" width="7" height="4" viewBox="0 0 7 4"><path d="M0 0H7L3.500 4z" fill="#c4c4c4"/></svg></div>
<div class="ni" style="top:378.80px;"><svg style="left:19px;top:3.700px" width="10.600" height="10.600" viewBox="0 0 11 11"><rect x="0.700" y="0.700" width="9.600" height="9.600" rx="1.500" fill="#111"/></svg><div class="t" style="left:36.5px">LVM</div></div>
<svg style="left:55px;top:406px" width="10" height="5" viewBox="0 0 10 5"><path d="M0.400 0.400 5 4.400 9.600 0.400" fill="none" stroke="#c8c8c8" stroke-width="0.800"/></svg>
</div>
<div class="a" style="left:363px;top:110px;width:1px;height:418px;background:#dedede"></div>
<!-- content -->
<div class="a" id="content" style="left:364px;top:110px;width:930px;height:418px;background:#fff;overflow:hidden">
<div class="a" style="left:0;top:0;width:930px;height:28px;background:#fff;border-bottom:1px solid #e4e4e4"></div>
<div class="btn" style="left:6px;top:4.500px;width:88px;height:18px"><div class="t" style="left:6px;top:2px">Package versions</div></div>
<div class="a" style="left:796.500px;top:4.500px;width:131.700px;height:18px;background:#fff;border:1px solid #cfcfcf"><div class="t" style="left:5px;top:2px">Hour (average)</div><svg style="left:118.200px;top:5.800px" width="7" height="4.400" viewBox="0 0 8 5"><path d="M0.400 0.400 4 4.200 7.600 0.400" fill="none" stroke="#777" stroke-width="1.100"/></svg></div>
<div class="a" style="left:7.75px;top:37px;width:908.250px;height:27px;background:#f5f5f5"></div>
<div class="t" style="left:15.5px;top:43px;font-size:11.700px;line-height:14px;height:14px;color:#2f86c8">hanan (Uptime: 13 days 23:01:30)</div>
<div class="a" style="left:7.75px;top:63.75px;width:908.250px;height:218px;background:#fff;border:1px solid #d6d6d6;border-top:none"></div>
<svg style="left:22px;top:76.5px" width="13" height="13" viewBox="0 0 13 13"><rect x="2.500" y="2.500" width="8" height="8" rx="1.200" fill="none" stroke="#111" stroke-width="1.350"/><rect x="4.300" y="4.300" width="4.400" height="4.400" fill="#111"/><path d="M4 0.300v2M5.400 0.300v2M6.800 0.300v2M8.200 0.300v2M4 10.700v2M5.400 10.700v2M6.800 10.700v2M8.200 10.700v2M0.300 4h2M0.300 5.400h2M0.300 6.800h2M0.300 8.200h2M10.700 4h2M10.700 5.400h2M10.700 6.800h2M10.700 8.200h2" stroke="#111" stroke-width="0.850"/></svg>
<div class="t " style="left:38.5px;top:77.2px;">CPU usage</div>
<div class="t r" style="right:475.7px;top:77.2px;">0.08% of 40 CPU(s)</div>
<div class="a" style="left:20px;top:91px;width:434.3px;height:3.5px;background:#f4f4f4"><div class="a" style="left:0;top:0;width:0.6px;height:3.5px;background:#8fbde6"></div></div>
<svg style="left:21px;top:100.300px" width="11" height="8.600" viewBox="0 0 11 10" preserveAspectRatio="none"><path d="M0 0.500h11v2.400H0zM0 3.800h11v2.400H0zM0 7.100h11v2.400H0z" fill="#111"/><path d="M6.500 1.300h3.500v.8H6.500zM4 4.600h6v.8H4zM7.500 7.900h2.500v.8H7.500z" fill="#fff"/></svg>
<div class="t " style="left:36.0px;top:99.2px;">Load average</div>
<div class="t r" style="right:475.7px;top:99.2px;">0.09,0.07,0.01</div>
<svg style="left:22px;top:135px" width="13" height="10" viewBox="0 0 13 10"><path d="M0 1.500h13v5.500H0z" fill="#111"/><path d="M1.500 3h1.800v2.500H1.500zM4.300 3h1.800v2.500H4.300zM7.100 3h1.800v2.500H7.100zM9.900 3h1.800v2.500H9.900z" fill="#fff"/><path d="M0.500 7.500h1.200v1.500H0.500zM2.700 7.500h1.200v1.500H2.700zM4.900 7.500h1.200v1.500H4.900zM7.100 7.500h1.200v1.500H7.100zM9.300 7.500h1.200v1.500H9.300zM11.500 7.500h1.200v1.500H11.500z" fill="#111"/></svg>
<div class="t " style="left:38.5px;top:134.2px;">RAM usage</div>
<div class="t r" style="right:475.7px;top:134.2px;">0.62% (3.12 GiB of 503.26 GiB)</div>
<div class="a" style="left:20px;top:148px;width:434.3px;height:3.3px;background:#f4f4f4"><div class="a" style="left:0;top:0;width:2.7px;height:3.3px;background:#8fbde6"></div></div>
<svg style="left:22px;top:158.200px" width="9.400" height="7" viewBox="0 0 9.400 7"><path d="M2 0.500h5.400l1.500 3.200v2.800H0.500V3.700z" fill="none" stroke="#222" stroke-width="1" stroke-linejoin="round"/><path d="M0.500 3.700h8.400" stroke="#222" stroke-width="1"/><circle cx="7.200" cy="5.100" r="0.500" fill="#222"/></svg>
<div class="t " style="left:36.0px;top:156.4px;">/ HD space</div>
<div class="t r" style="right:475.7px;top:156.4px;">84.44% (79.32 GiB of 93.93 GiB)</div>
<div class="a" style="left:20px;top:170px;width:434.3px;height:3.75px;background:#f4f4f4"><div class="a" style="left:0;top:0;width:366.7px;height:3.75px;background:#fcc50a"></div></div>
<svg style="left:472px;top:86.69999999999999px" width="10" height="10" viewBox="0 0 10 10"><circle cx="5" cy="5" r="4.100" fill="none" stroke="#111" stroke-width="1.300"/><path d="M5 2.500V5.300H3.200" fill="none" stroke="#111" stroke-width="1"/></svg>
<div class="t " style="left:486.0px;top:86.5px;">IO delay</div>
<div class="t r" style="right:25.5px;top:86.5px;">0.00%</div>
<div class="a" style="left:469.79999999999995px;top:100.75px;width:434.7px;height:3.3px;background:#f4f4f4"></div>
<div class="t " style="left:470.0px;top:134.2px;">KSM sharing</div>
<div class="t r" style="right:25.5px;top:134.2px;">0 B</div>
<svg style="left:472px;top:156.8px" width="10" height="10" viewBox="0 0 10 10"><path d="M8.800 4.500A3.900 3.900 0 0 0 2.100 2.600" fill="none" stroke="#111" stroke-width="1.600"/><path d="M1.200 5.500A3.900 3.900 0 0 0 7.900 7.400" fill="none" stroke="#111" stroke-width="1.600"/><path d="M0.200 0.600V4H3.600zM9.800 9.400V6H6.400z" fill="#111"/></svg>
<div class="t " style="left:486.0px;top:156.4px;">SWAP usage</div>
<div class="t r" style="right:25.5px;top:156.4px;">0.00% (0 B of 8.00 GiB)</div>
<div class="a" style="left:469.79999999999995px;top:170px;width:434.7px;height:3.75px;background:#f4f4f4"></div>
<div class="t " style="left:20.0px;top:194.2px;">CPU(s)</div>
<div class="t r" style="right:25.5px;top:194.2px;">40 x I<span style="background:#2f66d3;color:#fff;padding:1.200px 0 1.300px">ntel(R) Xeon(R) Gold 5115 CPU</span> @ 2.40GHz (2 Sockets)</div>
<div class="t " style="left:20.0px;top:213.4px;">Kernel Version</div>
<div class="t r" style="right:25.5px;top:213.4px;">Linux 6.2.16-3-pve #1 SMP PREEMPT_DYNAMIC PVE 6.2.16-3 (2023-06-17T05:58Z)</div>
<div class="t " style="left:20.0px;top:231.7px;">PVE Manager Version</div>
<div class="t r" style="right:25.5px;top:231.7px;">pve-manager/8.0.3/bbf3993334bfa916</div>
<div class="t " style="left:20.0px;top:250.9px;">Repository Status</div>
<svg style="left:443.5px;top:250.2px" width="12" height="12" viewBox="0 0 12 12"><circle cx="5.800" cy="5.800" r="5.800" fill="#21bf4b"/><path d="M3 6 5 8 8.700 3.900" fill="none" stroke="#fff" stroke-width="1.600"/></svg>
<div class="t " style="left:458.2px;top:250.9px;">Production-ready Enterprise repository enabled</div>
<svg style="left:675.7px;top:250.2px" width="12" height="12" viewBox="0 0 12 12"><circle cx="5.800" cy="5.800" r="5.800" fill="#fcc50a"/><path d="M5.800 2.400V6.800" stroke="#fff" stroke-width="1.700"/><circle cx="5.800" cy="8.800" r="0.950" fill="#fff"/></svg>
<div class="t " style="left:690.4px;top:250.9px;">Enterprise repository needs valid subscription</div>
<svg style="left:897px;top:251.7px" width="7" height="9" viewBox="0 0 7 9"><path d="M1 0.800 5 4.500 1 8.200" fill="none" stroke="#111" stroke-width="1.700"/></svg>

<div class="a" style="left:7.75px;top:289.5px;width:908.250px;height:27px;background:#f5f5f5"></div>
<div class="t" style="left:15.5px;top:296px;font-size:11.700px;line-height:14px;height:14px;color:#2f86c8">CPU usage</div>
<div class="a" style="left:7.75px;top:316px;width:908.250px;height:110px;background:#fff;border:1px solid #d6d6d6;border-top:none"></div>
<!-- legend -->
<div class="a" style="left:747.5px;top:293.5px;width:145px;height:19px;background:#fff;border:1px solid #dcdcdc;border-radius:2px"><div class="a" style="left:78.500px;top:0;width:1px;height:17px;background:#dcdcdc"></div><div class="a" style="left:6.500px;top:4.600px;width:8.400px;height:8.400px;border-radius:4.200px;background:#94ae0a"></div><div class="t" style="left:19px;top:3.300px">CPU usage</div><div class="a" style="left:85.500px;top:4.600px;width:8.400px;height:8.400px;border-radius:4.200px;background:#115fa6"></div><div class="t" style="left:98px;top:3.300px">IO delay</div></div>
<div class="a" style="left:897.5px;top:297px;width:13px;height:13px;border-radius:6.500px;border:1px solid #dedede;background:#fafafa;margin-left:-1px;margin-top:-0.500px"><div class="a" style="left:3px;top:5px;width:5px;height:1px;background:#c9d6e6"></div></div>
<svg style="left:0;top:0" width="930" height="418" viewBox="0 0 930 418" font-family="'Liberation Sans',Arial,sans-serif" font-size="10.140px" fill="#222">
<path d="M72.8 324V420M85.1 324V420M97.4 324V420M109.7 324V420M122.0 324V420M134.3 324V420M146.6 324V420M158.9 324V420M171.2 324V420M183.5 324V420M195.8 324V420M208.1 324V420M220.4 324V420M232.7 324V420M245.0 324V420M257.3 324V420M269.6 324V420M281.9 324V420M294.2 324V420M306.5 324V420M318.8 324V420M331.1 324V420M343.4 324V420M355.7 324V420M368.0 324V420M380.3 324V420M392.6 324V420M404.9 324V420M417.2 324V420M429.5 324V420M441.8 324V420M454.1 324V420M466.4 324V420M478.7 324V420M491.1 324V420M503.4 324V420M515.7 324V420M528.0 324V420M540.3 324V420M552.6 324V420M564.9 324V420M577.2 324V420M589.5 324V420M601.8 324V420M614.1 324V420M626.4 324V420M638.7 324V420M651.0 324V420M663.3 324V420M675.6 324V420M687.9 324V420M700.2 324V420M712.5 324V420M724.8 324V420M737.1 324V420M749.4 324V420M761.7 324V420M774.0 324V420M786.3 324V420M798.6 324V420M810.9 324V420M823.2 324V420M835.5 324V420M847.8 324V420M860.1 324V420M872.4 324V420M884.7 324V420M897.0 324V420M909.3 324V420M60.5 324.0H909.3M60.5 353.1H909.3M60.5 382.2H909.3M60.5 411.3H909.3" stroke="#dbdbdb" stroke-width="0.800" fill="none"/>
<polygon points="60.5,430 60.5,371.6 72.8,367.9 85.1,372.4 97.4,367.4 109.7,367.4 122.0,365.7 134.3,369.2 146.6,373.6 158.9,358.8 171.2,375.3 183.5,374.4 195.8,370.9 208.1,367.4 220.4,365.2 232.7,370.6 245.0,368.7 257.3,370.4 269.6,365.9 281.9,374.9 294.2,371.9 306.5,327.6 318.8,364.7 331.1,366.2 343.4,367.6 355.7,369.8 368.0,372.0 380.3,372.3 392.6,380.7 404.9,365.8 417.2,360.7 429.5,370.9 441.8,373.4 454.1,390.3 466.4,384.6 478.7,389.4 491.1,383.9 503.4,388.6 515.7,384.2 528.0,390.8 540.3,388.3 552.6,389.0 564.9,386.1 577.2,389.0 589.5,388.6 601.8,393.7 614.1,391.9 626.4,382.4 638.7,388.3 651.0,384.2 663.3,386.1 675.6,381.7 687.9,389.4 700.2,389.4 712.5,386.8 724.8,385.3 737.1,387.5 749.4,387.2 761.7,388.3 774.0,389.0 786.3,381.3 798.6,390.8 810.9,373.6 823.2,388.3 835.5,387.5 847.8,389.7 860.1,385.0 872.4,388.3 884.7,393.4 897.0,384.6 909.3,386.1 909.3,430" fill="#94ae0a" fill-opacity="0.600"/>
<polyline points="60.5,371.6 72.8,367.9 85.1,372.4 97.4,367.4 109.7,367.4 122.0,365.7 134.3,369.2 146.6,373.6 158.9,358.8 171.2,375.3 183.5,374.4 195.8,370.9 208.1,367.4 220.4,365.2 232.7,370.6 245.0,368.7 257.3,370.4 269.6,365.9 281.9,374.9 294.2,371.9 306.5,327.6 318.8,364.7 331.1,366.2 343.4,367.6 355.7,369.8 368.0,372.0 380.3,372.3 392.6,380.7 404.9,365.8 417.2,360.7 429.5,370.9 441.8,373.4 454.1,390.3 466.4,384.6 478.7,389.4 491.1,383.9 503.4,388.6 515.7,384.2 528.0,390.8 540.3,388.3 552.6,389.0 564.9,386.1 577.2,389.0 589.5,388.6 601.8,393.7 614.1,391.9 626.4,382.4 638.7,388.3 651.0,384.2 663.3,386.1 675.6,381.7 687.9,389.4 700.2,389.4 712.5,386.8 724.8,385.3 737.1,387.5 749.4,387.2 761.7,388.3 774.0,389.0 786.3,381.3 798.6,390.8 810.9,373.6 823.2,388.3 835.5,387.5 847.8,389.7 860.1,385.0 872.4,388.3 884.7,393.4 897.0,384.6 909.3,386.1" fill="none" stroke="#7f9415" stroke-width="0.900" stroke-linejoin="round"/>
<path d="M60.5 323.5V420M57.0 324.0H60.5M57.0 353.1H60.5M57.0 382.2H60.5M57.0 411.3H60.5" stroke="#222" stroke-width="0.900" fill="none"/>
<text x="43" y="326.7" text-anchor="middle">0.3</text><text x="43" y="355.8" text-anchor="middle">0.25</text><text x="43" y="384.9" text-anchor="middle">0.2</text><text x="43" y="414.0" text-anchor="middle">0.15</text>
<text transform="translate(27.5,416.5) rotate(-90)" font-size="12.500px" stroke="#222" stroke-width="0.300">%</text>
<circle cx="233.3" cy="370.9" r="4.500" fill="#94ae0a" stroke="#5f7205" stroke-width="1.100"/>
</svg>

<div class="a" style="left:917.500px;top:28.500px;width:13px;height:390px;background:linear-gradient(90deg,#fff,#f2f2f2)"></div>
<svg style="left:925.700px;top:35.500px" width="7" height="5" viewBox="0 0 7 5"><path d="M3.500 0 7 5H0z" fill="#8b8b8b"/></svg>
<div class="a" style="left:926.300px;top:46.500px;width:6px;height:107.500px;border-radius:3px;background:#8b8b8b"></div>
<svg style="left:925.700px;top:408px" width="7" height="5" viewBox="0 0 7 5"><path d="M0 0H7L3.500 5z" fill="#8b8b8b"/></svg>
</div>

<div class="a" style="left:7px;top:531.500px;width:1290px;height:28.500px;background:#f5f5f5"></div>
<div class="a" style="left:7px;top:559.500px;width:1290px;height:128.500px;background:#fff;border-top:1px solid #cdcdcd"></div>
<div class="a" style="left:14.750px;top:537px;width:36.500px;height:17px;background:#3892d4;border-radius:1.500px"><div class="t" style="left:5.500px;top:2.600px;color:#fff">Tasks</div></div>
<div class="t" style="left:64.500px;top:539.700px">Cluster log</div>
<div class="gh" style="left:7px;width:116.5px;background:#eaf2fb;"><div class="t">Start Time</div><svg style="left:56.500px;top:7px" width="7" height="10" viewBox="0 0 7 10"><path d="M3.500 0V9M0.500 6 3.500 9.300 6.500 6" fill="none" stroke="#999" stroke-width="0.800"/></svg></div>
<div class="gh" style="left:123.5px;width:116.5px;"><div class="t">End Time</div></div>
<div class="gh" style="left:240px;width:79px;"><div class="t">Node</div></div>
<div class="gh" style="left:319px;width:116.5px;"><div class="t">User name</div></div>
<div class="gh" style="left:435.5px;width:695.5px;"><div class="t">Description</div></div>
<div class="gh" style="left:1131px;width:155.6px;"><div class="t">Status</div></div>
<div class="a" style="left:7px;top:583px;width:1279.600px;height:1px;background:#d8d8d8"></div>
<div class="gr e" style="top:583px;height:19.6px;--t:5px"><div class="t" style="left:8px">Sep 25 04:27:34</div><div class="t" style="left:124.5px">Sep 25 04:27:36</div><div class="t" style="left:241px">tala</div><div class="t" style="left:320px">root@pam</div><div class="t" style="left:436.5px">Update package database</div><div class="t" style="left:1132px">Error: command 'apt-get upd...</div></div>
<div class="gr w" style="top:602.5px;height:19.6px;--t:4.5px"><div class="t" style="left:8px">Sep 25 04:04:05</div><div class="t" style="left:124.5px">Sep 25 04:04:10</div><div class="t" style="left:241px">bathala</div><div class="t" style="left:320px">root@pam</div><div class="t" style="left:436.5px">Update package database</div><div class="t" style="left:1132px">OK</div></div>
<div class="gr e" style="top:622.25px;height:19.6px;--t:3.75px"><div class="t" style="left:8px">Sep 25 03:19:36</div><div class="t" style="left:124.5px">Sep 25 03:19:42</div><div class="t" style="left:241px">mayari</div><div class="t" style="left:320px">root@pam</div><div class="t" style="left:436.5px">Update package database</div><div class="t" style="left:1132px">Error: command 'apt-get upd...</div></div>
<div class="gr e" style="top:641.75px;height:19.6px;--t:4.25px"><div class="t" style="left:8px">Sep 25 02:10:26</div><div class="t" style="left:124.5px">Sep 25 02:10:30</div><div class="t" style="left:241px">hanan</div><div class="t" style="left:320px">root@pam</div><div class="t" style="left:436.5px">Update package database</div><div class="t" style="left:1132px">Error: command 'apt-get upd...</div></div>
<div class="gr " style="top:661.5px;height:19.6px;--t:3.5px"><div class="t" style="left:8px">Sep 24 12:30:09</div><div class="t" style="left:124.5px">Sep 24 12:30:12</div><div class="t" style="left:241px">hanan</div><div class="t" style="left:320px">itdbadm05@pve</div><div class="t" style="left:436.5px">CT 20005 - Shutdown</div><div class="t" style="left:1132px">OK</div></div>
<div class="gr " style="top:681px;height:19.6px;--t:3px"><div class="t" style="left:8px">Sep 24 11:46:46</div><div class="t" style="left:124.5px">Sep 24 12:30:10</div><div class="t" style="left:241px">hanan</div><div class="t" style="left:320px">itdbadm05@pve</div><div class="t" style="left:436.5px">VM/CT 20005 - Console</div><div class="t" style="left:1132px">OK</div></div>
<div class="a" style="left:1286.600px;top:560px;width:8px;height:128px;background:#f1f1f1"></div>
<svg style="left:1289.500px;top:591px" width="7" height="5" viewBox="0 0 7 5"><path d="M3.500 0 7 5H0z" fill="#8b8b8b"/></svg>
<div class="a" style="left:1290.500px;top:600px;width:6px;height:13px;border-radius:3px;background:#8b8b8b"></div>
<svg style="left:1289.500px;top:678px" width="7" height="5" viewBox="0 0 7 5"><path d="M0 0H7L3.500 5z" fill="#8b8b8b"/></svg>
<div class="a" style="left:7px;top:688.400px;width:1290px;height:3.900px;background:#cbcacd"></div>
<div class="a" style="left:0;top:692.300px;width:1293px;height:30px;background:#fdfdfd"></div>
<div class="a" style="left:6px;top:692.300px;width:1290px;height:2.500px;background:linear-gradient(#e4e3e5,#fdfdfd)"></div>



<div class="a" style="left:634px;top:528.300px;width:37px;height:3.200px;background:#dddcdf"></div>
<!-- Edge mini menu -->
<div class="a" style="left:1169.400px;top:168.200px;width:34.600px;height:131px;background:#fff;border:1px solid #e4e4e4;border-radius:1.500px;box-shadow:0 1px 3px rgba(0,0,0,.07)"></div>
<svg style="left:1179.500px;top:177.500px" width="14" height="12" viewBox="0 0 14 12"><path d="M0.700 6.500C2 3.500 4.300 2.200 7 2.200S12 3.500 13.300 6.500" fill="none" stroke="#333" stroke-width="0.900"/><circle cx="7" cy="6.600" r="2.300" fill="none" stroke="#333" stroke-width="0.900"/><path d="M1.500 0.500 12.500 11.500" stroke="#333" stroke-width="0.900"/></svg>
<svg style="left:1181.500px;top:206.700px" width="11" height="3" viewBox="0 0 11 3"><circle cx="1.200" cy="1.500" r="1" fill="#111"/><circle cx="5.500" cy="1.500" r="1" fill="#111"/><circle cx="9.800" cy="1.500" r="1" fill="#111"/></svg>
<svg style="left:1180.200px;top:227.400px" width="13" height="13" viewBox="0 0 13 13"><use href="#cpl" x="0" y="0" width="13" height="13"/></svg>
<svg style="left:1181.500px;top:252px" width="11" height="13" viewBox="0 0 11 13"><rect x="2.800" y="0.500" width="7.700" height="10" rx="1.500" fill="none" stroke="#333" stroke-width="0.900"/><path d="M2.800 2.500H2a1.500 1.500 0 0 0-1.500 1.500v7A1.500 1.500 0 0 0 2 12.500h5" fill="none" stroke="#333" stroke-width="0.900"/></svg>
<svg style="left:1181px;top:278px" width="12" height="12" viewBox="0 0 12 12"><circle cx="4.800" cy="4.800" r="4" fill="none" stroke="#333" stroke-width="0.900"/><path d="M7.700 7.700 11.500 11.500" stroke="#333" stroke-width="0.900"/></svg>
<!-- mouse cursor -->
<svg style="left:1225.500px;top:311px" width="9" height="14" viewBox="0 0 9 14"><path d="M0.500 0.500V11L3 8.600 4.800 12.800 6.600 12 4.800 8H8.300z" fill="#fff" stroke="#111" stroke-width="0.800" stroke-linejoin="round"/></svg>
<!-- recorder dot -->
<div class="a" style="left:631px;top:692px;width:22px;height:22px;border-radius:11px;background:radial-gradient(circle,rgba(255,150,160,.8) 0,rgba(255,165,175,.6) 35%,rgba(255,190,198,.25) 70%,rgba(255,210,215,0) 100%)"></div>
<div class="a" style="left:637.800px;top:698.800px;width:8.400px;height:8.400px;border-radius:4.200px;border:2.500px solid #f2000d;background:#ffc4c8"></div>

</div>
</body>
</html>
